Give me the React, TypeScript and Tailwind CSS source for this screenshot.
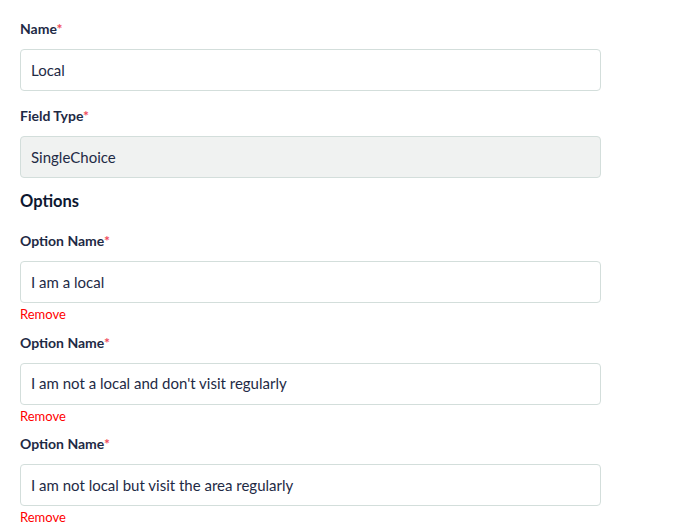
const OPTIONS = [
  "I am a local",
  "I am not a local and don't visit regularly",
  "I am not local but visit the area regularly",
];

function Label({ children }: { children: string }) {
  return (
    <label className="block h-5 leading-5 text-[14px] font-bold text-[#1e2a45] mb-2.5">
      {children}
      <span className="text-[#f04a5a]">*</span>
    </label>
  );
}

function Field({ value, disabled }: { value: string; disabled?: boolean }) {
  return (
    <div
      className={`h-[42px] w-[581px] rounded border border-[#d3dedb] px-2.5 flex items-center text-[15px] text-[#1e2a45] ${
        disabled ? "bg-[#f0f2f1]" : "bg-white"
      }`}
    >
      {value}
    </div>
  );
}

export default function App() {
  return (
    <div
      className="bg-white w-[676px] h-[532px] overflow-hidden px-5 pt-[19px]"
      style={{ fontFamily: "Lato, 'Noto Sans', sans-serif" }}
    >
      <Label>Name</Label>
      <Field value="Local" />

      <div className="mt-[15px]">
        <Label>Field Type</Label>
        <Field value="SingleChoice" disabled />
      </div>

      <h3 className="mt-[11px] h-6 leading-6 text-[16.5px] font-bold text-[#0d1730]">Options</h3>

      <div className="mt-[18px]">
        {OPTIONS.map((opt, i) => (
          <div key={i} className={i > 0 ? "mt-[10.5px]" : ""}>
            <Label>Option Name</Label>
            <Field value={opt} />
            <button className="block mt-[3px] h-4 leading-4 text-[13px] text-[#ff0000]">Remove</button>
          </div>
        ))}
      </div>
    </div>
  );
}
